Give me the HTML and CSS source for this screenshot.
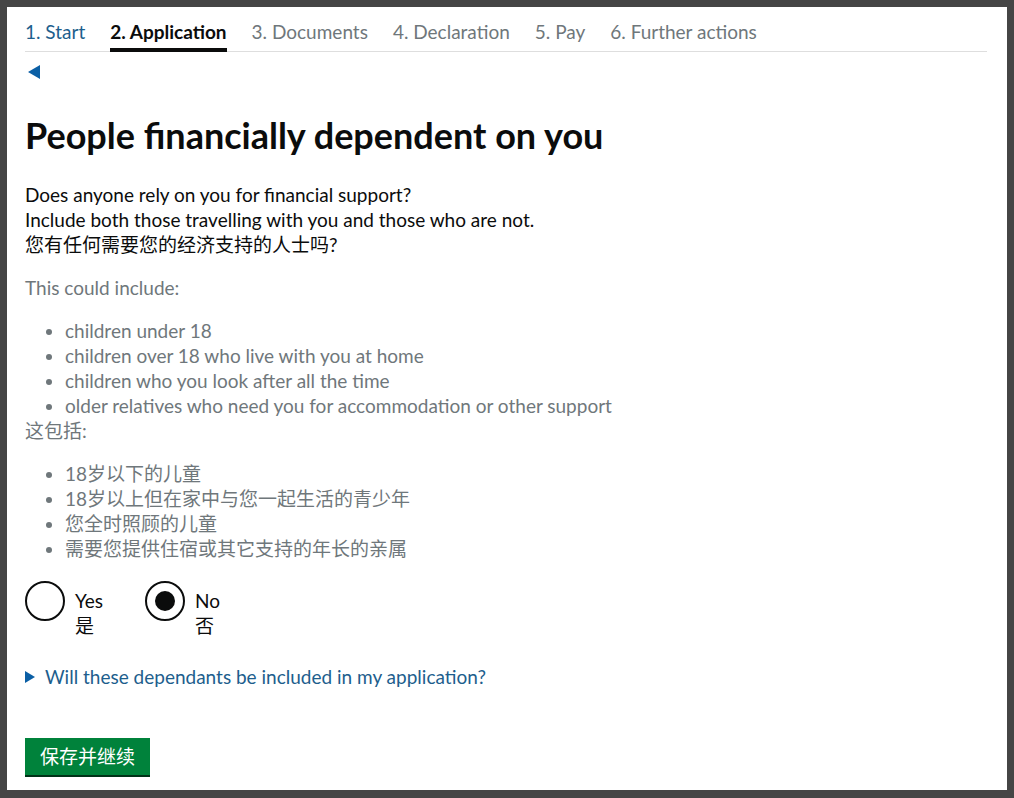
FILE: index.html
```html
<!DOCTYPE html>
<html lang="en">
<head>
<meta charset="utf-8">
<title>People financially dependent on you</title>
<link rel="stylesheet" href="styles.css">
</head>
<body>
<div class="page">
  <nav class="steps">
    <a class="step step-done" href="#">1. Start</a>
    <span class="step step-current">2. Application</span>
    <span class="step">3. Documents</span>
    <span class="step">4. Declaration</span>
    <span class="step">5. Pay</span>
    <span class="step">6. Further actions</span>
  </nav>
  <a class="back" href="#" aria-label="Back"><span class="back-arrow"></span></a>

  <main class="main">
    <h1 class="title">People financially dependent on you</h1>
    <div class="question">
      <div>Does anyone rely on you for financial support?</div>
      <div>Include both those travelling with you and those who are not.</div>
      <div>您有任何需要您的经济支持的人士吗?</div>
    </div>

    <div class="hint">
      <p class="hint-p">This could include:</p>
      <ul class="hint-list">
        <li>children under 18</li>
        <li>children over 18 who live with you at home</li>
        <li>children who you look after all the time</li>
        <li>older relatives who need you for accommodation or other support</li>
      </ul>
      <p class="hint-p">这包括:</p>
      <ul class="hint-list">
        <li>18岁以下的儿童</li>
        <li>18岁以上但在家中与您一起生活的青少年</li>
        <li>您全时照顾的儿童</li>
        <li>需要您提供住宿或其它支持的年长的亲属</li>
      </ul>
    </div>

    <div class="radios">
      <label class="radio">
        <span class="radio-circle"></span>
        <span class="radio-label">Yes<br>是</span>
      </label>
      <label class="radio">
        <span class="radio-circle checked"></span>
        <span class="radio-label">No<br>否</span>
      </label>
    </div>

    <div class="details">
      <span class="details-arrow"></span>
      <span class="details-text">Will these dependants be included in my application?</span>
    </div>

    <button class="button" type="button">保存并继续</button>
  </main>
</div>
</body>
</html>
```

FILE: styles.css
```css
html, body {
  margin: 0;
  padding: 0;
}
body {
  background: #454545;
  padding: 7px 7px 8px 7px;
  font-family: Lato, "Noto Sans CJK SC", sans-serif;
  color: #0b0c0c;
}
.page {
  background: #fff;
  height: 783px;
  box-sizing: border-box;
  padding: 0 20px 0 18px;
}
.steps {
  display: flex;
  gap: 25px;
  border-bottom: 1px solid #dedede;
  padding-top: 13px;
}
.step {
  font-size: 19px;
  line-height: 24px;
  padding-bottom: 4px;
  border-bottom: 4px solid transparent;
  margin-bottom: -1px;
  color: #6f777b;
  text-decoration: none;
}
.step-done {
  color: #1d5e8d;
}
.step-current {
  color: #0b0c0c;
  font-weight: 700;
  border-bottom-color: #0b0c0c;
}
.back {
  display: block;
  width: 20px;
  padding: 13px 0 0 3px;
  height: 15px;
}
.back-arrow {
  display: block;
  width: 0;
  height: 0;
  border-top: 7.5px solid transparent;
  border-bottom: 7.5px solid transparent;
  border-right: 12px solid #0b5fa5;
}
.main {
  padding-top: 35px;
}
.title {
  margin: 0 0 27px 0;
  font-size: 36px;
  line-height: 40px;
  font-weight: 700;
}
.question {
  font-size: 19px;
  line-height: 25px;
  margin-bottom: 18px;
}
.hint {
  color: #6f777b;
  font-size: 19px;
  line-height: 25px;
}
.hint-p {
  margin: 0 0 18px 0;
}
.hint-list {
  margin: 0;
  padding-left: 40px;
}
.radios {
  display: flex;
  margin-top: 20px;
}
.radio {
  display: flex;
  gap: 10px;
  margin-right: 42px;
}
.radio-circle {
  width: 40px;
  height: 40px;
  box-sizing: border-box;
  border: 2px solid #0b0c0c;
  border-radius: 50%;
  display: flex;
  align-items: center;
  justify-content: center;
}
.radio-circle.checked::after {
  content: "";
  width: 20px;
  height: 20px;
  border-radius: 50%;
  background: #0b0c0c;
}
.radio-label {
  font-size: 19px;
  line-height: 25px;
  padding-top: 7px;
}
.details {
  display: flex;
  align-items: center;
  gap: 10px;
  margin-top: 26px;
  color: #1d5e8d;
  font-size: 19px;
  line-height: 25px;
}
.details-arrow {
  width: 0;
  height: 0;
  border-top: 6px solid transparent;
  border-bottom: 6px solid transparent;
  border-left: 10px solid #0b5fa5;
}
.button {
  margin-top: 49px;
  background: #00823b;
  color: #fff;
  border: 0;
  font-family: inherit;
  font-size: 19px;
  line-height: 25px;
  padding: 6px 15px 6px 15px;
  box-shadow: 0 2px 0 #003218;
}
```
